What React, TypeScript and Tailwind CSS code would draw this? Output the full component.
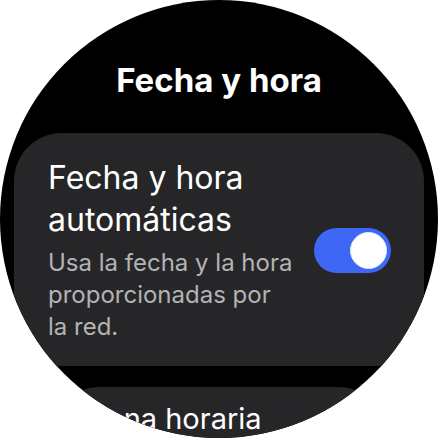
export default function App() {
  return (
    <div className="w-[438px] h-[438px] bg-white overflow-hidden" style={{ fontFamily: 'Inter, "Noto Sans", sans-serif' }}>
      <div className="w-[438px] h-[438px] rounded-full bg-black overflow-hidden flex flex-col">
        <div className="pt-[60px] h-[100px] text-center text-white font-bold text-[33px] leading-[40px]">
          Fecha y hora
        </div>
        <div className="mt-[33px] mx-[14px] h-[233px] shrink-0 rounded-t-[48px] bg-[#262628] pl-[34px] pr-[33px] pt-[24px] flex items-start">
          <div className="flex-1 flex items-center justify-between">
            <div className="w-[250px]">
              <div className="text-white text-[32px] leading-[42px]">
                Fecha y hora<br />automáticas
              </div>
              <div className="mt-[6px] text-[#b3b3b6] text-[24px] leading-[32px] whitespace-nowrap">
                Usa la fecha y la hora<br />proporcionadas por<br />la red.
              </div>
            </div>
            <div className="w-[77px] h-[45px] rounded-full bg-[#3e67f5] flex items-center justify-end pr-[4px] shrink-0">
              <div className="w-[37px] h-[37px] rounded-full bg-white border border-[#dfe6ff]" />
            </div>
          </div>
        </div>
        <div className="mt-[21px] mx-[58px] h-[80px] shrink-0 rounded-t-[40px] bg-[#262628] pl-[30px] pt-[14px]">
          <div className="text-white text-[29px] leading-[36px]">Zona horaria</div>
        </div>
      </div>
    </div>
  );
}
